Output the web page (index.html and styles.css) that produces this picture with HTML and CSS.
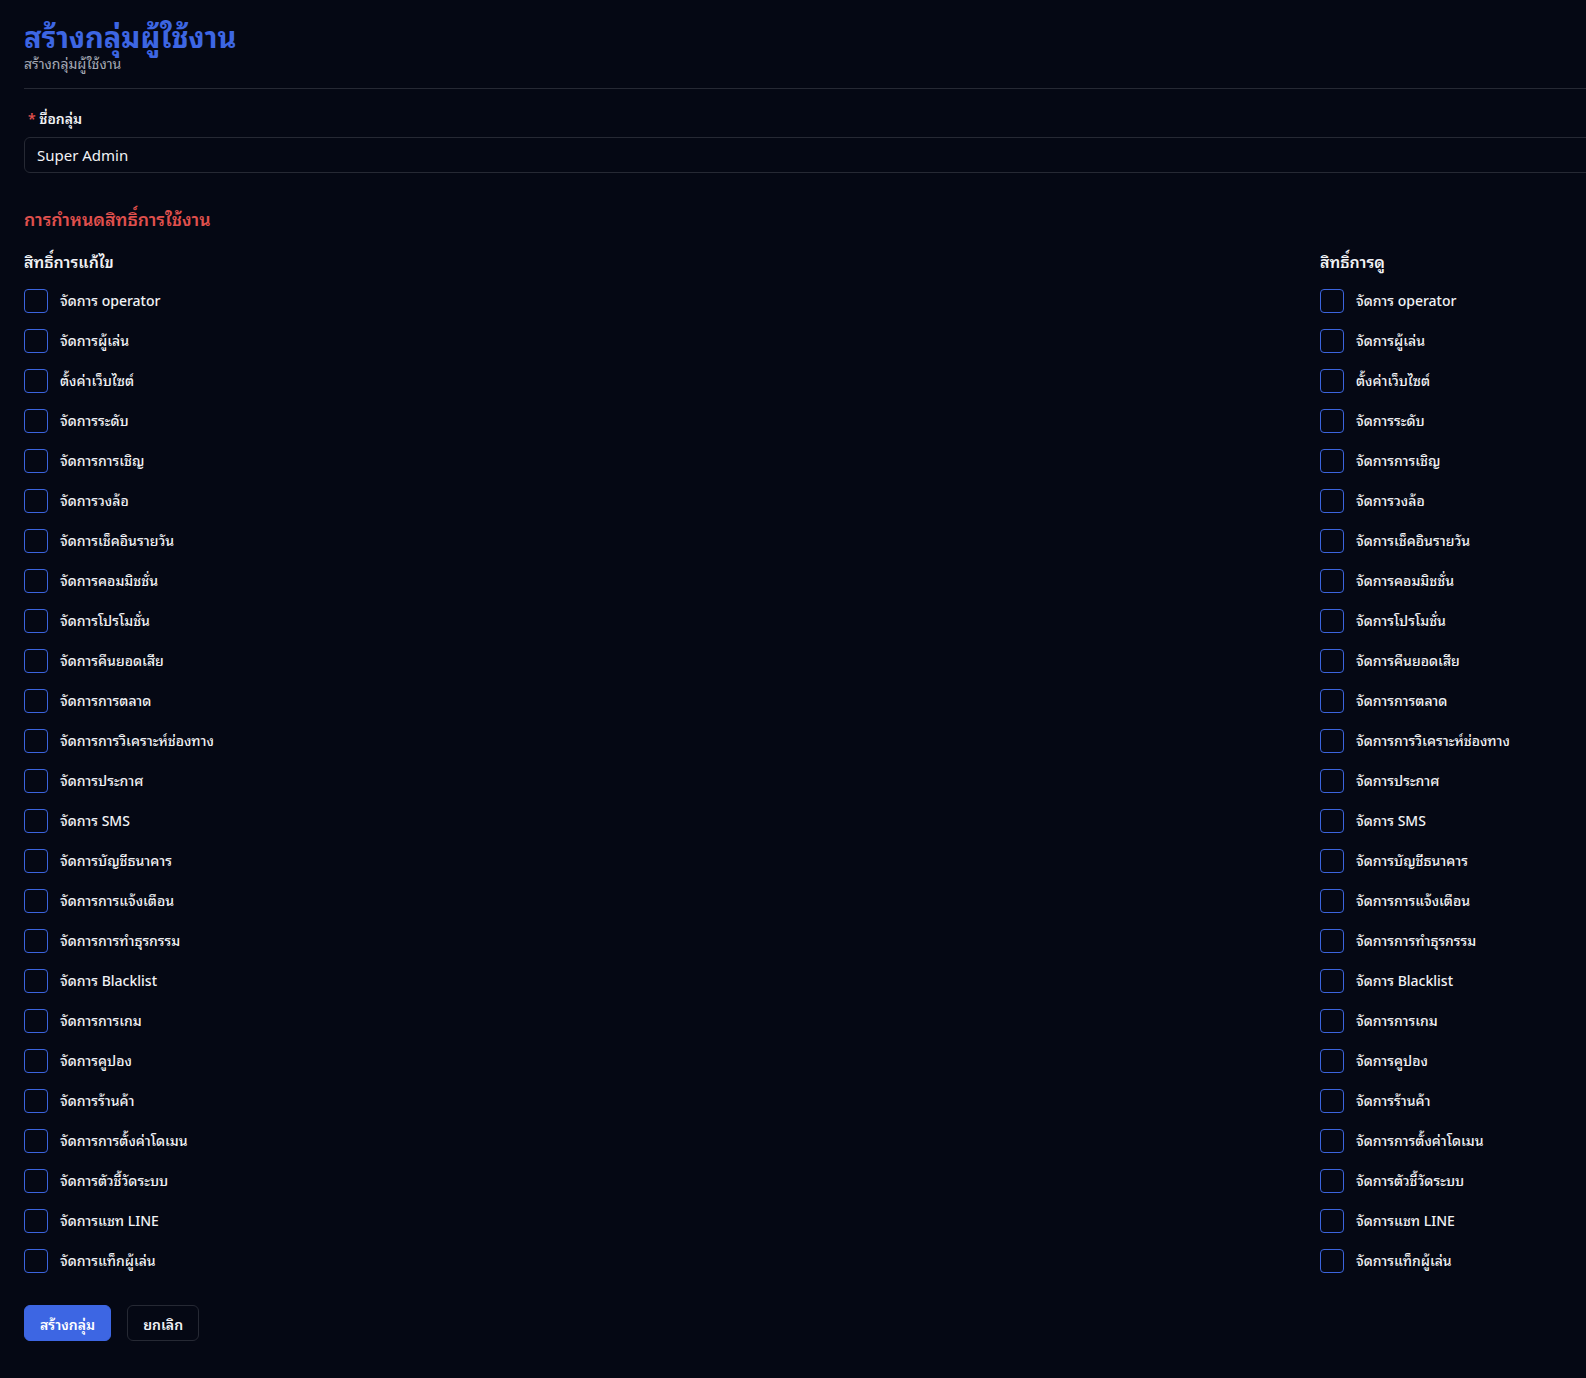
FILE: index.html
```html
<!DOCTYPE html>
<html lang="th">
<head>
    <meta charset="UTF-8">
    <meta name="viewport" content="width=device-width, initial-scale=1.0">
    <title>สร้างกลุ่มผู้ใช้งาน</title>
    <link rel="stylesheet" href="styles.css">
</head>
<body>

    <div class="page">
        <div class="page-header">
            <h1>สร้างกลุ่มผู้ใช้งาน</h1>
            <div class="subtitle">สร้างกลุ่มผู้ใช้งาน</div>
        </div>

        <form id="groupForm">
            <div class="form-group">
                <label for="groupName"><span class="req">*</span> ชื่อกลุ่ม</label>
                <input type="text" id="groupName" value="Super Admin">
            </div>

            <h2 class="section-title">การกำหนดสิทธิ์การใช้งาน</h2>

            <div class="perm-grid">
                <div class="perm-col">
                    <h3>สิทธิ์การแก้ไข</h3>
                    <div class="perm-list" id="editList"></div>
                </div>
                <div class="perm-col">
                    <h3>สิทธิ์การดู</h3>
                    <div class="perm-list" id="viewList"></div>
                </div>
            </div>

            <div class="actions">
                <button type="submit" class="btn btn-primary">สร้างกลุ่ม</button>
                <button type="button" class="btn btn-outline">ยกเลิก</button>
            </div>
        </form>
    </div>

    <script>
        const permissions = [
            'จัดการ operator',
            'จัดการผู้เล่น',
            'ตั้งค่าเว็บไซต์',
            'จัดการระดับ',
            'จัดการการเชิญ',
            'จัดการวงล้อ',
            'จัดการเช็คอินรายวัน',
            'จัดการคอมมิชชั่น',
            'จัดการโปรโมชั่น',
            'จัดการคืนยอดเสีย',
            'จัดการการตลาด',
            'จัดการการวิเคราะห์ช่องทาง',
            'จัดการประกาศ',
            'จัดการ SMS',
            'จัดการบัญชีธนาคาร',
            'จัดการการแจ้งเตือน',
            'จัดการการทำธุรกรรม',
            'จัดการ Blacklist',
            'จัดการการเกม',
            'จัดการคูปอง',
            'จัดการร้านค้า',
            'จัดการการตั้งค่าโดเมน',
            'จัดการตัวชี้วัดระบบ',
            'จัดการแชท LINE',
            'จัดการแท็กผู้เล่น'
        ];

        // Build checkbox rows for both columns
        function fillList(listId, prefix) {
            const list = document.getElementById(listId);
            permissions.forEach((name, i) => {
                const row = document.createElement('label');
                row.className = 'perm-item';
                row.innerHTML = `<input type="checkbox" id="${prefix}-${i}"><span>${name}</span>`;
                list.appendChild(row);
            });
        }

        fillList('editList', 'edit');
        fillList('viewList', 'view');

        document.getElementById('groupForm').addEventListener('submit', function(e) {
            e.preventDefault();
        });
    </script>
</body>
</html>
```

FILE: styles.css
```css
html, body {
    overflow: hidden;
}

body {
    font-family: 'Noto Sans', 'Noto Sans Thai Looped', 'Noto Looped Thai', 'Loma', 'Garuda', 'Tlwg Typo', 'Noto Sans Thai', sans-serif;
    margin: 0;
    padding: 0;
    background-color: #050814;
    color: #f1f2f5;
}

.page {
    width: 2568px;
    padding: 20px 24px 24px;
}

.page-header {
    padding-bottom: 14px;
    border-bottom: 1px solid #262934;
}

h1 {
    margin: 0;
    font-size: 29px;
    line-height: 34px;
    font-weight: 700;
    color: #3d66e3;
}

.subtitle {
    font-size: 14px;
    line-height: 20px;
    color: #a4a8b4;
}

.form-group {
    margin-top: 20px;
}

.form-group label {
    display: block;
    margin-bottom: 8px;
    padding-left: 4px;
    font-size: 14px;
    line-height: 20px;
    font-weight: 600;
}

.req {
    color: #e0504d;
}

.form-group input {
    display: block;
    width: 100%;
    height: 36px;
    padding: 0 12px;
    background-color: #050814;
    border: 1px solid #262934;
    border-radius: 6px;
    color: #f1f2f5;
    font-family: inherit;
    font-size: 15px;
    box-sizing: border-box;
    outline: none;
}

.section-title {
    margin: 32px 0 0;
    font-size: 17.7px;
    line-height: 28px;
    font-weight: 600;
    color: #e0504d;
}

.perm-grid {
    display: grid;
    grid-template-columns: 1fr 1fr;
    column-gap: 24px;
    margin-top: 17px;
}

.perm-col h3 {
    margin: 0 0 15px;
    font-size: 16px;
    line-height: 24px;
    font-weight: 600;
}

.perm-list {
    display: flex;
    flex-direction: column;
    gap: 16px;
}

.perm-item {
    display: flex;
    align-items: center;
    gap: 12px;
    font-size: 14px;
    line-height: 24px;
    font-weight: 500;
    cursor: pointer;
}

.perm-item input {
    appearance: none;
    -webkit-appearance: none;
    width: 24px;
    height: 24px;
    margin: 0;
    border: 1.5px solid #3b64de;
    border-radius: 4px;
    background-color: transparent;
    box-sizing: border-box;
    cursor: pointer;
}

.perm-item input:checked {
    background-color: #3d66e3;
}

.actions {
    display: flex;
    gap: 16px;
    margin-top: 32px;
}

.btn {
    height: 36px;
    padding: 0 15px;
    border-radius: 6px;
    font-family: inherit;
    font-size: 14px;
    font-weight: 600;
    cursor: pointer;
}

.btn-primary {
    background-color: #3d66e3;
    border: 1px solid #3d66e3;
    color: white;
}

.btn-outline {
    background-color: transparent;
    border: 1px solid #262934;
    color: #f1f2f5;
}
```
